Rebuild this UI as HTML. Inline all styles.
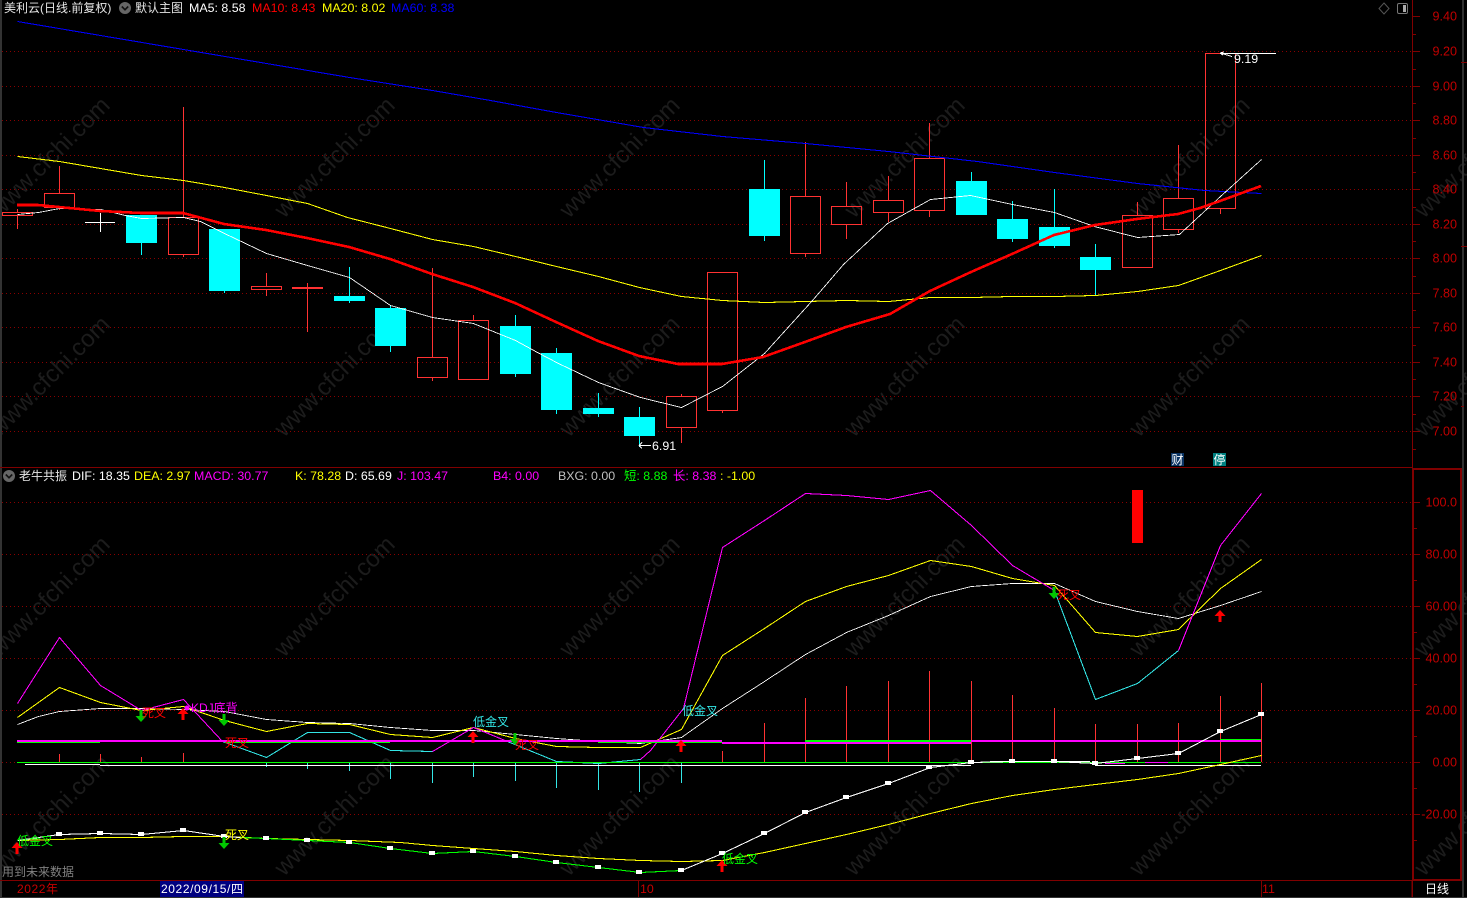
<!DOCTYPE html>
<html lang="zh">
<head>
<meta charset="utf-8">
<title>K线图</title>
<style>
html,body{margin:0;padding:0;background:#000;width:1467px;height:898px;overflow:hidden}
svg{display:block;position:absolute;left:0;top:0}
text{font-family:"Liberation Sans","Noto Sans CJK SC",sans-serif;font-size:12.4px}
.l{shape-rendering:crispEdges;fill:none}
.t polyline{stroke-width:.85}
.t polyline.s{stroke-width:1.05}
.wm text{font-size:24px;fill:#1c1c1c}
.ax text{fill:#c00000;text-anchor:end;font-size:12.6px}
.cn{font-size:12px}
</style>
</head>
<body>
<svg width="1467" height="898" viewBox="0 0 1467 898" xmlns="http://www.w3.org/2000/svg">
<defs>
<path id="u" d="M0 0L5.5 6H1.5V12H-1.5V6H-5.5Z"/>
<path id="d" d="M0 12L5.5 6H1.5V0H-1.5V6H-5.5Z"/>
</defs>

<!-- watermarks -->
<g class="wm">
<text transform="translate(-1,219) rotate(-45)">www.cfchi.com</text>
<text transform="translate(284,219) rotate(-45)">www.cfchi.com</text>
<text transform="translate(569,219) rotate(-45)">www.cfchi.com</text>
<text transform="translate(854,219) rotate(-45)">www.cfchi.com</text>
<text transform="translate(1139,219) rotate(-45)">www.cfchi.com</text>
<text transform="translate(1424,219) rotate(-45)">www.cfchi.com</text>
<text transform="translate(-1,438) rotate(-45)">www.cfchi.com</text>
<text transform="translate(284,438) rotate(-45)">www.cfchi.com</text>
<text transform="translate(569,438) rotate(-45)">www.cfchi.com</text>
<text transform="translate(854,438) rotate(-45)">www.cfchi.com</text>
<text transform="translate(1139,438) rotate(-45)">www.cfchi.com</text>
<text transform="translate(1424,438) rotate(-45)">www.cfchi.com</text>
<text transform="translate(-1,658) rotate(-45)">www.cfchi.com</text>
<text transform="translate(284,658) rotate(-45)">www.cfchi.com</text>
<text transform="translate(569,658) rotate(-45)">www.cfchi.com</text>
<text transform="translate(854,658) rotate(-45)">www.cfchi.com</text>
<text transform="translate(1139,658) rotate(-45)">www.cfchi.com</text>
<text transform="translate(1424,658) rotate(-45)">www.cfchi.com</text>
<text transform="translate(-1,877) rotate(-45)">www.cfchi.com</text>
<text transform="translate(284,877) rotate(-45)">www.cfchi.com</text>
<text transform="translate(569,877) rotate(-45)">www.cfchi.com</text>
<text transform="translate(854,877) rotate(-45)">www.cfchi.com</text>
<text transform="translate(1139,877) rotate(-45)">www.cfchi.com</text>
<text transform="translate(1424,877) rotate(-45)">www.cfchi.com</text>
</g>

<!-- dotted grid -->
<path class="l" stroke="#8a0000" stroke-dasharray="1 3" d="M2 51.5H1411M2 86.5H1411M2 120.5H1411M2 155.5H1411M2 189.5H1411M2 224.5H1411M2 258.5H1411M2 293.5H1411M2 327.5H1411M2 362.5H1411M2 396.5H1411M2 431.5H1411M2 502.5H1411M2 554.5H1411M2 606.5H1411M2 658.5H1411M2 710.5H1411M2 762.5H1411M2 814.5H1411"/>

<!-- frame -->
<rect x="0" y="0" width="2" height="898" fill="#333"/>
<rect x="1462" y="0" width="2" height="898" fill="#303030"/>
<rect x="0" y="897" width="1467" height="1" fill="#333"/>
<path class="l" stroke="#800000" d="M0 467.5H1412M0 880.5H1412M1412.5 0V897"/>
<path class="l" stroke="#800000" stroke-width="2" d="M1413 469H1461V880H1413M1461 468V881M1413 468V881"/>
<path class="l" stroke="#800000" d="M1412 16.5h8M1412 34.5h4M1412 51.5h8M1412 69.5h4M1412 86.5h8M1412 103.5h4M1412 120.5h8M1412 138.5h4M1412 155.5h8M1412 172.5h4M1412 189.5h8M1412 207.5h4M1412 224.5h8M1412 241.5h4M1412 258.5h8M1412 276.5h4M1412 293.5h8M1412 310.5h4M1412 327.5h8M1412 345.5h4M1412 362.5h8M1412 379.5h4M1412 396.5h8M1412 414.5h4M1412 431.5h8M1412 449.5h4M1414 502.5h6M1414 528.5h3M1414 554.5h6M1414 580.5h3M1414 606.5h6M1414 632.5h3M1414 658.5h6M1414 684.5h3M1414 710.5h6M1414 736.5h3M1414 762.5h6M1414 788.5h3M1414 814.5h6M1414 840.5h3"/>
<path class="l" stroke="#800000" d="M1461 62.5h6M1461 246.5h6M1461 406.5h3M638.5 881V897M1261.5 881V897M1412 881V897"/>

<!-- cyan wicks + bodies -->
<path class="l" stroke="#00ffff" d="M141.5 243V255M224.5 291V293M349.5 267V303M390.5 305V352M515.5 315V377M556.5 348V414M598.5 393V417M639.5 407V447M764.5 160V241M971.5 172V181M1012.5 201V242M1054.5 189V248M1095.5 244V295"/>
<g fill="#00ffff">
<rect x="126" y="215" width="31" height="28"/>
<rect x="209" y="229" width="31" height="62"/>
<rect x="334" y="296" width="31" height="5"/>
<rect x="375" y="308" width="31" height="38"/>
<rect x="500" y="326" width="31" height="48"/>
<rect x="541" y="353" width="31" height="57"/>
<rect x="583" y="408" width="31" height="6"/>
<rect x="624" y="417" width="31" height="19"/>
<rect x="749" y="189" width="31" height="47"/>
<rect x="956" y="181" width="31" height="34"/>
<rect x="997" y="219" width="31" height="20"/>
<rect x="1039" y="227" width="31" height="19"/>
<rect x="1080" y="257" width="31" height="13"/>
</g>

<!-- red candles -->
<path class="l" stroke="#ff3232" d="M17.5 209V212.5M17.5 215.5V229M2.5 212.5H32.5V215.5H2.5ZM59.5 166V193.5M59.5 207.5V210M44.5 193.5H74.5V207.5H44.5ZM183.5 107V217.5M183.5 254.5V257M168.5 217.5H198.5V254.5H168.5ZM266.5 273V286.5M266.5 289.5V296M251.5 286.5H281.5V289.5H251.5ZM307.5 283V332M292 288.5H323M292 287.5H323M432.5 268V357.5M432.5 377.5V381M417.5 357.5H447.5V377.5H417.5ZM473.5 315V320.5M458.5 320.5H488.5V379.5H458.5ZM681.5 394V396.5M681.5 427.5V443M666.5 396.5H696.5V427.5H666.5ZM722.5 410.5V413M707.5 272.5H737.5V410.5H707.5ZM805.5 142V196.5M805.5 253.5V257M790.5 196.5H820.5V253.5H790.5ZM846.5 182V206.5M846.5 224.5V239M831.5 206.5H861.5V224.5H831.5ZM888.5 176V200.5M888.5 212.5V222M873.5 200.5H903.5V212.5H873.5ZM929.5 123V158.5M929.5 210.5V217M914.5 158.5H944.5V210.5H914.5ZM1137.5 202V215.5M1122.5 215.5H1152.5V267.5H1122.5ZM1178.5 145V198.5M1178.5 229.5V233M1163.5 198.5H1193.5V229.5H1163.5ZM1220.5 208.5V214M1205.5 53.5H1235.5V208.5H1205.5Z"/>
<path class="l" stroke="#fff" d="M85 222.5H115M100.5 213V232M1220 53.5H1276"/>

<!-- MAs -->
<g class="t" transform="translate(.5,.5)">
<polyline class="l s" stroke="#0000ff" points="17,21 100,35 183,49 266,63 349,77 432,90 490,100 556,112 643,127 722,136 805,143 888,151 977,161 1054,172 1137,183 1204,190 1261,193"/>
<polyline class="l s" stroke="#ffff00" points="17,156 59,161 100,168 141,175 183,180 224,187 266,195 307,203 347,217 390,228 432,239 473,246 515,256 556,266 598,276 639,287 681,296 722,300 764,302 805,301 846,300 888,301 930,297 971,297 1012,296 1054,296 1095,295 1137,291 1178,285 1220,270 1261,255"/>
<polyline class="l" stroke="#fff" points="17,214 38,212 59,208 100,209 125,215 141,218 183,217 200,221 224,233 266,253 307,265 349,277 390,305 432,317 473,323 515,340 537,352 558,363 598,382 640,397 681,407 722,386 764,353 812,300 843,264 887,223 930,199 970,195 1012,204 1054,212 1094,226 1137,237 1179,234 1220,196 1261,159"/>
</g>
<polyline class="l" stroke="#ff0000" stroke-width="2.6" points="17,205 38,205 59,207 100,211 141,213 183,213 224,224 266,230 307,238 349,247 390,259 432,274 473,287 515,303 556,322 598,341 639,356 678,364 722,364 763,357 805,342 846,327 890,314 930,291 971,272 1012,254 1054,235 1095,225 1137,219 1178,214 1200,208 1220,201 1261,186"/>

<!-- price labels -->
<path class="l" stroke="#fff" d="M1220 53l4-1M1220 53l3 2M1222 53.5l10 3"/>
<text x="1234" y="63" fill="#fff">9.19</text>
<path class="l" stroke="#fff" d="M639 445.5H651M639 445.5l3-3M639 445.5l3 3"/>
<text x="652" y="450" fill="#fff">6.91</text>

<!-- header row 1 -->
<text x="4" y="12" fill="#e6e6e6" class="cn">美利云(日线.前复权)</text>
<circle cx="125" cy="8" r="6" fill="#666"/>
<path d="M121.8 6.5L125 9.7L128.2 6.5" fill="none" stroke="#111" stroke-width="1.6"/>
<text x="135" y="12" fill="#e6e6e6" class="cn">默认主图</text>
<text x="189" y="12" fill="#fff">MA5: 8.58</text>
<text x="252" y="12" fill="#ff0000">MA10: 8.43</text>
<text x="322" y="12" fill="#ffff00">MA20: 8.02</text>
<text x="391" y="12" fill="#0000ff">MA60: 8.38</text>
<path d="M1384 3L1389 8.5L1384 14L1379 8.5Z" fill="none" stroke="#555"/>
<rect x="1397.5" y="3.5" width="10" height="10" rx="1.5" fill="none" stroke="#777"/>
<rect x="1403" y="5" width="3" height="7" fill="#aaa"/>

<!-- axis -->
<g class="ax">
<text x="1457" y="20.5">9.40</text>
<text x="1457" y="55.5">9.20</text>
<text x="1457" y="90.5">9.00</text>
<text x="1457" y="124.5">8.80</text>
<text x="1457" y="159.5">8.60</text>
<text x="1457" y="193.5">8.40</text>
<text x="1457" y="228.5">8.20</text>
<text x="1457" y="262.5">8.00</text>
<text x="1457" y="297.5">7.80</text>
<text x="1457" y="331.5">7.60</text>
<text x="1457" y="366.5">7.40</text>
<text x="1457" y="400.5">7.20</text>
<text x="1457" y="435.5">7.00</text>
<text x="1457" y="506.5">100.0</text>
<text x="1457" y="558.5">80.00</text>
<text x="1457" y="610.5">60.00</text>
<text x="1457" y="662.5">40.00</text>
<text x="1457" y="714.5">20.00</text>
<text x="1457" y="766.5">0.00</text>
<text x="1457" y="818.5">-20.00</text>
</g>

<!-- badges -->
<rect x="1171" y="453" width="13" height="13" fill="#0a3464"/>
<text x="1171.5" y="464" fill="#fff" class="cn">财</text>
<rect x="1213" y="453" width="13" height="13" fill="#008080"/>
<text x="1213.5" y="464" fill="#fff" class="cn">停</text>

<!-- header row 2 -->
<circle cx="9" cy="476" r="6" fill="#666"/>
<path d="M5.8 474.5L9 477.7L12.2 474.5" fill="none" stroke="#111" stroke-width="1.6"/>
<text x="19" y="480" fill="#e6e6e6" class="cn">老牛共振</text>
<text x="72" y="480" fill="#fff">DIF: 18.35</text>
<text x="134" y="480" fill="#ffff00">DEA: 2.97</text>
<text x="194" y="480" fill="#ff00ff">MACD: 30.77</text>
<text x="295" y="480" fill="#ffff00">K: 78.28</text>
<text x="345" y="480" fill="#fff">D: 65.69</text>
<text x="397" y="480" fill="#ff00ff">J: 103.47</text>
<text x="493" y="480" fill="#ff00ff">B4: 0.00</text>
<text x="558" y="480" fill="#c0c0c0">BXG: 0.00</text>
<text x="624" y="480" fill="#00ff00">短: 8.88</text>
<text x="673" y="480" fill="#ff00ff">长: 8.38</text>
<text x="720" y="480" fill="#ffff00">: -1.00</text>

<rect x="1132" y="490" width="11" height="53" fill="#ff0000"/>

<!-- MACD bars -->
<path class="l" stroke="#ff3232" d="M59.5 754V762M100.5 754V762M141.5 757V762M183.5 753V762M722.5 751V762M764.5 723V762M805.5 698V762M846.5 686V762M888.5 681V762M929.5 671V762M971.5 681V762M1012.5 695V762M1054.5 708V762M1095.5 724V762M1137.5 724V762M1178.5 723V762M1220.5 696V762M1261.5 683V762"/>
<path class="l" stroke="#33e6e6" d="M266.5 763V767M307.5 763V769M349.5 763V771M390.5 763V779M432.5 763V783M473.5 763V777M515.5 763V781M556.5 763V788M598.5 763V790M639.5 763V792M681.5 763V783"/>

<!-- KDJ -->
<g class="t" transform="translate(.5,.5)">
<polyline class="l" stroke="#fff" points="17,724 38,716 59,711 100,708 141,708 183,709 224,711 266,719 307,722 349,723 390,727 432,730 473,730 515,734 556,738 598,741 640,743 681,737 722,708 764,681 805,654 846,632 888,615 930,596 971,586 1012,583 1054,583 1095,601 1137,611 1178,618 1220,605 1261,591"/>
<polyline class="l s" stroke="#ffff00" points="17,717 59,687 100,702 141,710 183,706 224,720 266,731 307,723 349,724 390,734 432,737 473,727 515,738 556,746 598,747 640,747 681,729 722,655 764,628 805,601 846,586 888,575 930,560 971,566 1012,578 1054,585 1095,632 1137,636 1178,629 1220,588 1261,559"/>
<polyline class="l s" stroke="#ff00ff" points="17,703 59,637 100,685 141,710 183,699 222,741"/>
<polyline class="l s" stroke="#33e6e6" points="222,741 266,757 307,732 349,732 390,750 432,751"/>
<polyline class="l s" stroke="#ff00ff" points="432,751 473,727 507,741"/>
<polyline class="l s" stroke="#33e6e6" points="507,741 556,761 598,763 640,759"/>
<polyline class="l s" stroke="#ff00ff" points="640,759 650,750 683,708 722,547 764,520 805,493 846,495 888,499 930,490 971,525 1012,565 1054,590"/>
<polyline class="l s" stroke="#33e6e6" points="1054,590 1095,699 1137,683 1178,650"/>
<polyline class="l s" stroke="#ff00ff" points="1178,650 1220,545 1261,493"/>
</g>

<!-- horizontal bands -->
<path class="l" stroke="#00ff00" d="M17 742.5H100M225 742.5H390M598 742.5H722"/>
<path class="l" stroke="#00ff00" stroke-width="2" d="M805 741H971M1220 740H1261"/>
<path class="l" stroke="#ff00ff" stroke-width="2" d="M17 741H722M722 743H971M971 741H1261"/>
<path class="l" stroke="#fff" stroke-width="1.2" d="M17 762.5H25M25 764.5H100M100 765.5H720M720 765.5H971M1095 765.5H1261"/>
<path class="l" stroke="#fff" d="M990 761.5H1090"/>
<path class="l" stroke="#00ff00" d="M17 762.5H1261"/>
<path class="l" stroke="#ff00ff" d="M1105 763.5H1125M1145 762.5H1168"/>

<!-- lower curves -->
<g class="t" transform="translate(.5,.5)">
<polyline class="l s" stroke="#ffff00" points="17,840 59,839 100,837 141,837 183,836 224,836 266,838 307,839 349,840 400,842 432,845 473,848 515,851 556,855 598,858 640,860 681,861 722,860 764,852 805,843 846,834 888,824 930,813 971,803 1012,795 1054,789 1095,784 1137,779 1178,773 1220,764 1261,755"/>
<polyline class="l s" stroke="#fff" points="17,840 59,834 100,833 141,834 183,830 224,836 240,837"/>
<polyline class="l s" stroke="#00ff00" points="240,837 266,838 307,840 349,842 390,848 432,853 473,851 515,856 556,862 598,867 640,872 681,870"/>
<polyline class="l s" stroke="#fff" points="681,870 722,853 764,833 805,812 846,797 888,783 930,767 971,762 1012,761 1054,761 1095,763 1137,758 1178,753 1220,731 1261,714"/>
</g>
<path class="l" stroke="#fff" stroke-width="4" d="M56 834h6M97 833h6M138 834h6M180 830h6M221 836h6M263 838h6M304 840h6M346 842h6M387 848h6M429 853h6M470 851h6M512 856h6M553 862h6M595 867h6M636 872h6M678 870h6M719 853h6M761 833h6M802 812h6M843 797h6M885 783h6M926 767h6M968 762h6M1009 761h6M1051 761h6M1092 763h6M1134 758h6M1175 753h6M1217 731h6M1258 714h6"/>

<!-- arrows -->
<use href="#d" x="141" y="710" fill="#00c800"/>
<use href="#u" x="183" y="708" fill="#ff0000"/>
<use href="#d" x="224" y="714" fill="#00c800"/>
<use href="#u" x="473" y="731" fill="#ff0000"/>
<use href="#d" x="515" y="733" fill="#00c800"/>
<use href="#u" x="681" y="740" fill="#ff0000"/>
<use href="#d" x="1054" y="587" fill="#00c800"/>
<use href="#u" x="1220" y="610" fill="#ff0000"/>
<use href="#u" x="17" y="842" fill="#ff0000"/>
<use href="#d" x="224" y="837" fill="#00c800"/>
<use href="#u" x="722" y="860" fill="#ff0000"/>
<circle cx="187" cy="708" r="2.5" fill="#ff00ff"/>

<!-- signal labels -->
<text x="142" y="717" fill="#ff0000" class="cn">死叉</text>
<text x="191" y="712" fill="#ff00ff" class="cn">KDJ底背</text>
<text x="225" y="747" fill="#ff0000" class="cn">死叉</text>
<text x="473" y="726" fill="#33e6e6" class="cn">低金叉</text>
<text x="515" y="749" fill="#ff0000" class="cn">死叉</text>
<text x="682" y="715" fill="#33e6e6" class="cn">低金叉</text>
<text x="1057" y="599" fill="#ff0000" class="cn">死叉</text>
<text x="17" y="845" fill="#00ff00" class="cn">低金叉</text>
<text x="225" y="839" fill="#ffff00" class="cn">死叉</text>
<text x="722" y="863" fill="#00ff00" class="cn">低金叉</text>
<text x="2" y="876" fill="#808080" class="cn">用到未来数据</text>

<!-- time axis -->
<text x="17" y="893" fill="#c80000" class="cn" textLength="41">2022年</text>
<rect x="160" y="881" width="84" height="16" fill="#000080"/>
<text x="161" y="893" fill="#fff" class="cn" textLength="82">2022/09/15/四</text>
<text x="640" y="893" fill="#c80000">10</text>
<text x="1262" y="893" fill="#c80000">11</text>
<text x="1425" y="893" fill="#fff" class="cn">日线</text>
</svg>
</body>
</html>
